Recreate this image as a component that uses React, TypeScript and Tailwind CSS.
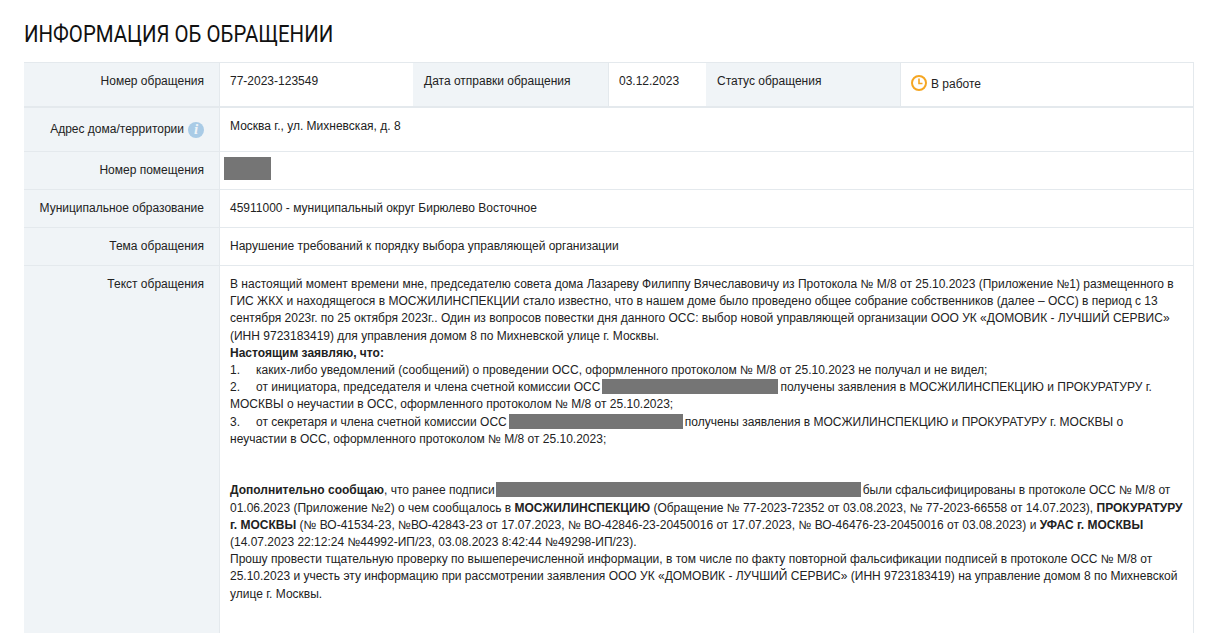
const FONT = "font-['Liberation_Sans','Noto_Sans',sans-serif]"

function Redacted({ className }: { className: string }) {
  return <span className={`inline-block align-top bg-[#757575] ${className}`} />
}

function Label({ children, className = '' }: { children: React.ReactNode; className?: string }) {
  return (
    <div className={`w-[196px] shrink-0 bg-[#f0f4f7] border-r border-[#e4e9ed] pr-[15px] text-right ${className}`}>
      {children}
    </div>
  )
}

function Row({ label, children, className = '', labelClass = '' }: { label: React.ReactNode; children: React.ReactNode; className?: string; labelClass?: string }) {
  return (
    <div className={`flex border-b border-[#e4e9ed] ${className}`}>
      <Label className={labelClass}>{label}</Label>
      <div className="flex-1 pl-[10px] pr-[10px]">{children}</div>
    </div>
  )
}

export default function App() {
  return (
    <div className={`h-[633px] overflow-hidden bg-white pl-6 pr-5 text-[12px] leading-[17.2px] text-[#222] ${FONT}`}>
      {/* заголовок */}
      <h1 className="pt-[20px] h-[62px] font-['Roboto',sans-serif] text-[24px] leading-[28px] text-[#111] whitespace-nowrap">
        <span className="inline-block origin-left scale-x-[0.85]">ИНФОРМАЦИЯ ОБ ОБРАЩЕНИИ</span>
      </h1>

      <div className="border-t border-r border-[#e4e9ed]">
        {/* верхняя строка */}
        <div className="flex h-[45px] border-b-2 border-[#e4e9ed]">
          <Label className="pt-[10px]">Номер обращения</Label>
          <div className="w-[193px] pl-[10px] pt-[10px]">77-2023-123549</div>
          <div className="w-[196px] bg-[#f0f4f7] border-r border-[#e4e9ed] pl-[11px] pt-[10px]">Дата отправки обращения</div>
          <div className="w-[97px] pl-[10px] pt-[10px]">03.12.2023</div>
          <div className="w-[195px] bg-[#f0f4f7] border-r border-[#e4e9ed] pl-[11px] pt-[10px]">Статус обращения</div>
          <div className="flex-1 pl-[9px] pt-[10px] flex items-start gap-[3px]">
            <svg width="18" height="18" viewBox="0 0 18 18" fill="none" className="mt-[1px] shrink-0">
              <circle cx="9" cy="9" r="7" stroke="#f5a623" strokeWidth="2" />
              <path d="M9 4.5v5h3.5" stroke="#f5a623" strokeWidth="1.6" />
            </svg>
            <span className="mt-[3px]">В работе</span>
          </div>
        </div>

        <Row
          className="h-[44px]"
          labelClass="pt-[13px] flex justify-end items-start gap-[4px]"
          label={
            <>
              <span>Адрес дома/территории</span>
              <span className="mt-[1px] flex h-[16px] w-[16px] items-center justify-center rounded-full bg-[#a9cbe6] font-['Liberation_Serif',serif] text-[15px] font-bold italic text-[#f0f4f7]">
                i
              </span>
            </>
          }
        >
          <div className="pt-[10px]">Москва г., ул. Михневская, д. 8</div>
        </Row>

        <Row className="h-[38px]" labelClass="pt-[10px]" label="Номер помещения">
          <Redacted className="ml-[-6px] mt-[5px] h-[23px] w-[47px]" />
        </Row>

        <Row className="h-[38px]" labelClass="pt-[10px]" label="Муниципальное образование">
          <div className="pt-[10px]">45911000 - муниципальный округ Бирюлево Восточное</div>
        </Row>

        <Row className="h-[38px]" labelClass="pt-[10px]" label="Тема обращения">
          <div className="pt-[10px]">Нарушение требований к порядку выбора управляющей организации</div>
        </Row>

        {/* текст обращения */}
        <Row className="h-[400px] border-b-0" labelClass="pt-[10px]" label="Текст обращения">
          <div className="pt-[10px]">
            <p>
              В настоящий момент времени мне, председателю совета дома Лазареву Филиппу Вячеславовичу из Протокола № М/8 от 25.10.2023 (Приложение №1) размещенного в ГИС ЖКХ и находящегося в МОСЖИЛИНСПЕКЦИИ стало известно, что в нашем доме было проведено общее собрание собственников (далее – ОСС) в период с 13 сентября 2023г. по 25 октября 2023г.. Один из вопросов повестки дня данного ОСС: выбор новой управляющей организации ООО УК «ДОМОВИК - ЛУЧШИЙ СЕРВИС» (ИНН 9723183419) для управления домом 8 по Михневской улице г. Москвы.
            </p>
            <p className="font-bold">Настоящим заявляю, что:</p>
            <p>
              <span className="inline-block w-[26px]">1.</span>каких-либо уведомлений (сообщений) о проведении ОСС, оформленного протоколом № М/8 от 25.10.2023 не получал и не видел;
            </p>
            <p>
              <span className="inline-block w-[26px]">2.</span>от инициатора, председателя и члена счетной комиссии ОСС
              <Redacted className="ml-[2px] mr-[2px] h-[15px] w-[176px]" />получены заявления в МОСЖИЛИНСПЕКЦИЮ и ПРОКУРАТУРУ г. МОСКВЫ о неучастии в ОСС, оформленного протоколом № М/8 от 25.10.2023;
            </p>
            <p>
              <span className="inline-block w-[26px]">3.</span>от секретаря и члена счетной комиссии ОСС
              <Redacted className="ml-[2px] mr-[2px] h-[15px] w-[174px]" />получены заявления в МОСЖИЛИНСПЕКЦИЮ и ПРОКУРАТУРУ г. МОСКВЫ о<br />неучастии в ОСС, оформленного протоколом № М/8 от 25.10.2023;
            </p>
            <p className="mt-[34.4px]">
              <b>Дополнительно сообщаю</b>, что ранее подписи
              <Redacted className="ml-[1px] mr-[2px] h-[15px] w-[365px]" />были сфальсифицированы в протоколе ОСС № М/8 от 01.06.2023 (Приложение №2) о чем сообщалось в <b>МОСЖИЛИНСПЕКЦИЮ</b> (Обращение № 77-2023-72352 от 03.08.2023, № 77-2023-66558 от 14.07.2023), <b>ПРОКУРАТУРУ г. МОСКВЫ</b> (№ ВО-41534-23, №ВО-42843-23 от 17.07.2023, № ВО-42846-23-20450016 от 17.07.2023, № ВО-46476-23-20450016 от 03.08.2023) и <b>УФАС г. МОСКВЫ</b> (14.07.2023 22:12:24 №44992-ИП/23, 03.08.2023 8:42:44 №49298-ИП/23).
            </p>
            <p>
              Прошу провести тщательную проверку по вышеперечисленной информации, в том числе по факту повторной фальсификации подписей в протоколе ОСС № М/8 от 25.10.2023 и учесть эту информацию при рассмотрении заявления ООО УК «ДОМОВИК - ЛУЧШИЙ СЕРВИС» (ИНН 9723183419) на управление домом 8 по Михневской улице г. Москвы.
            </p>
          </div>
        </Row>
      </div>
    </div>
  )
}
